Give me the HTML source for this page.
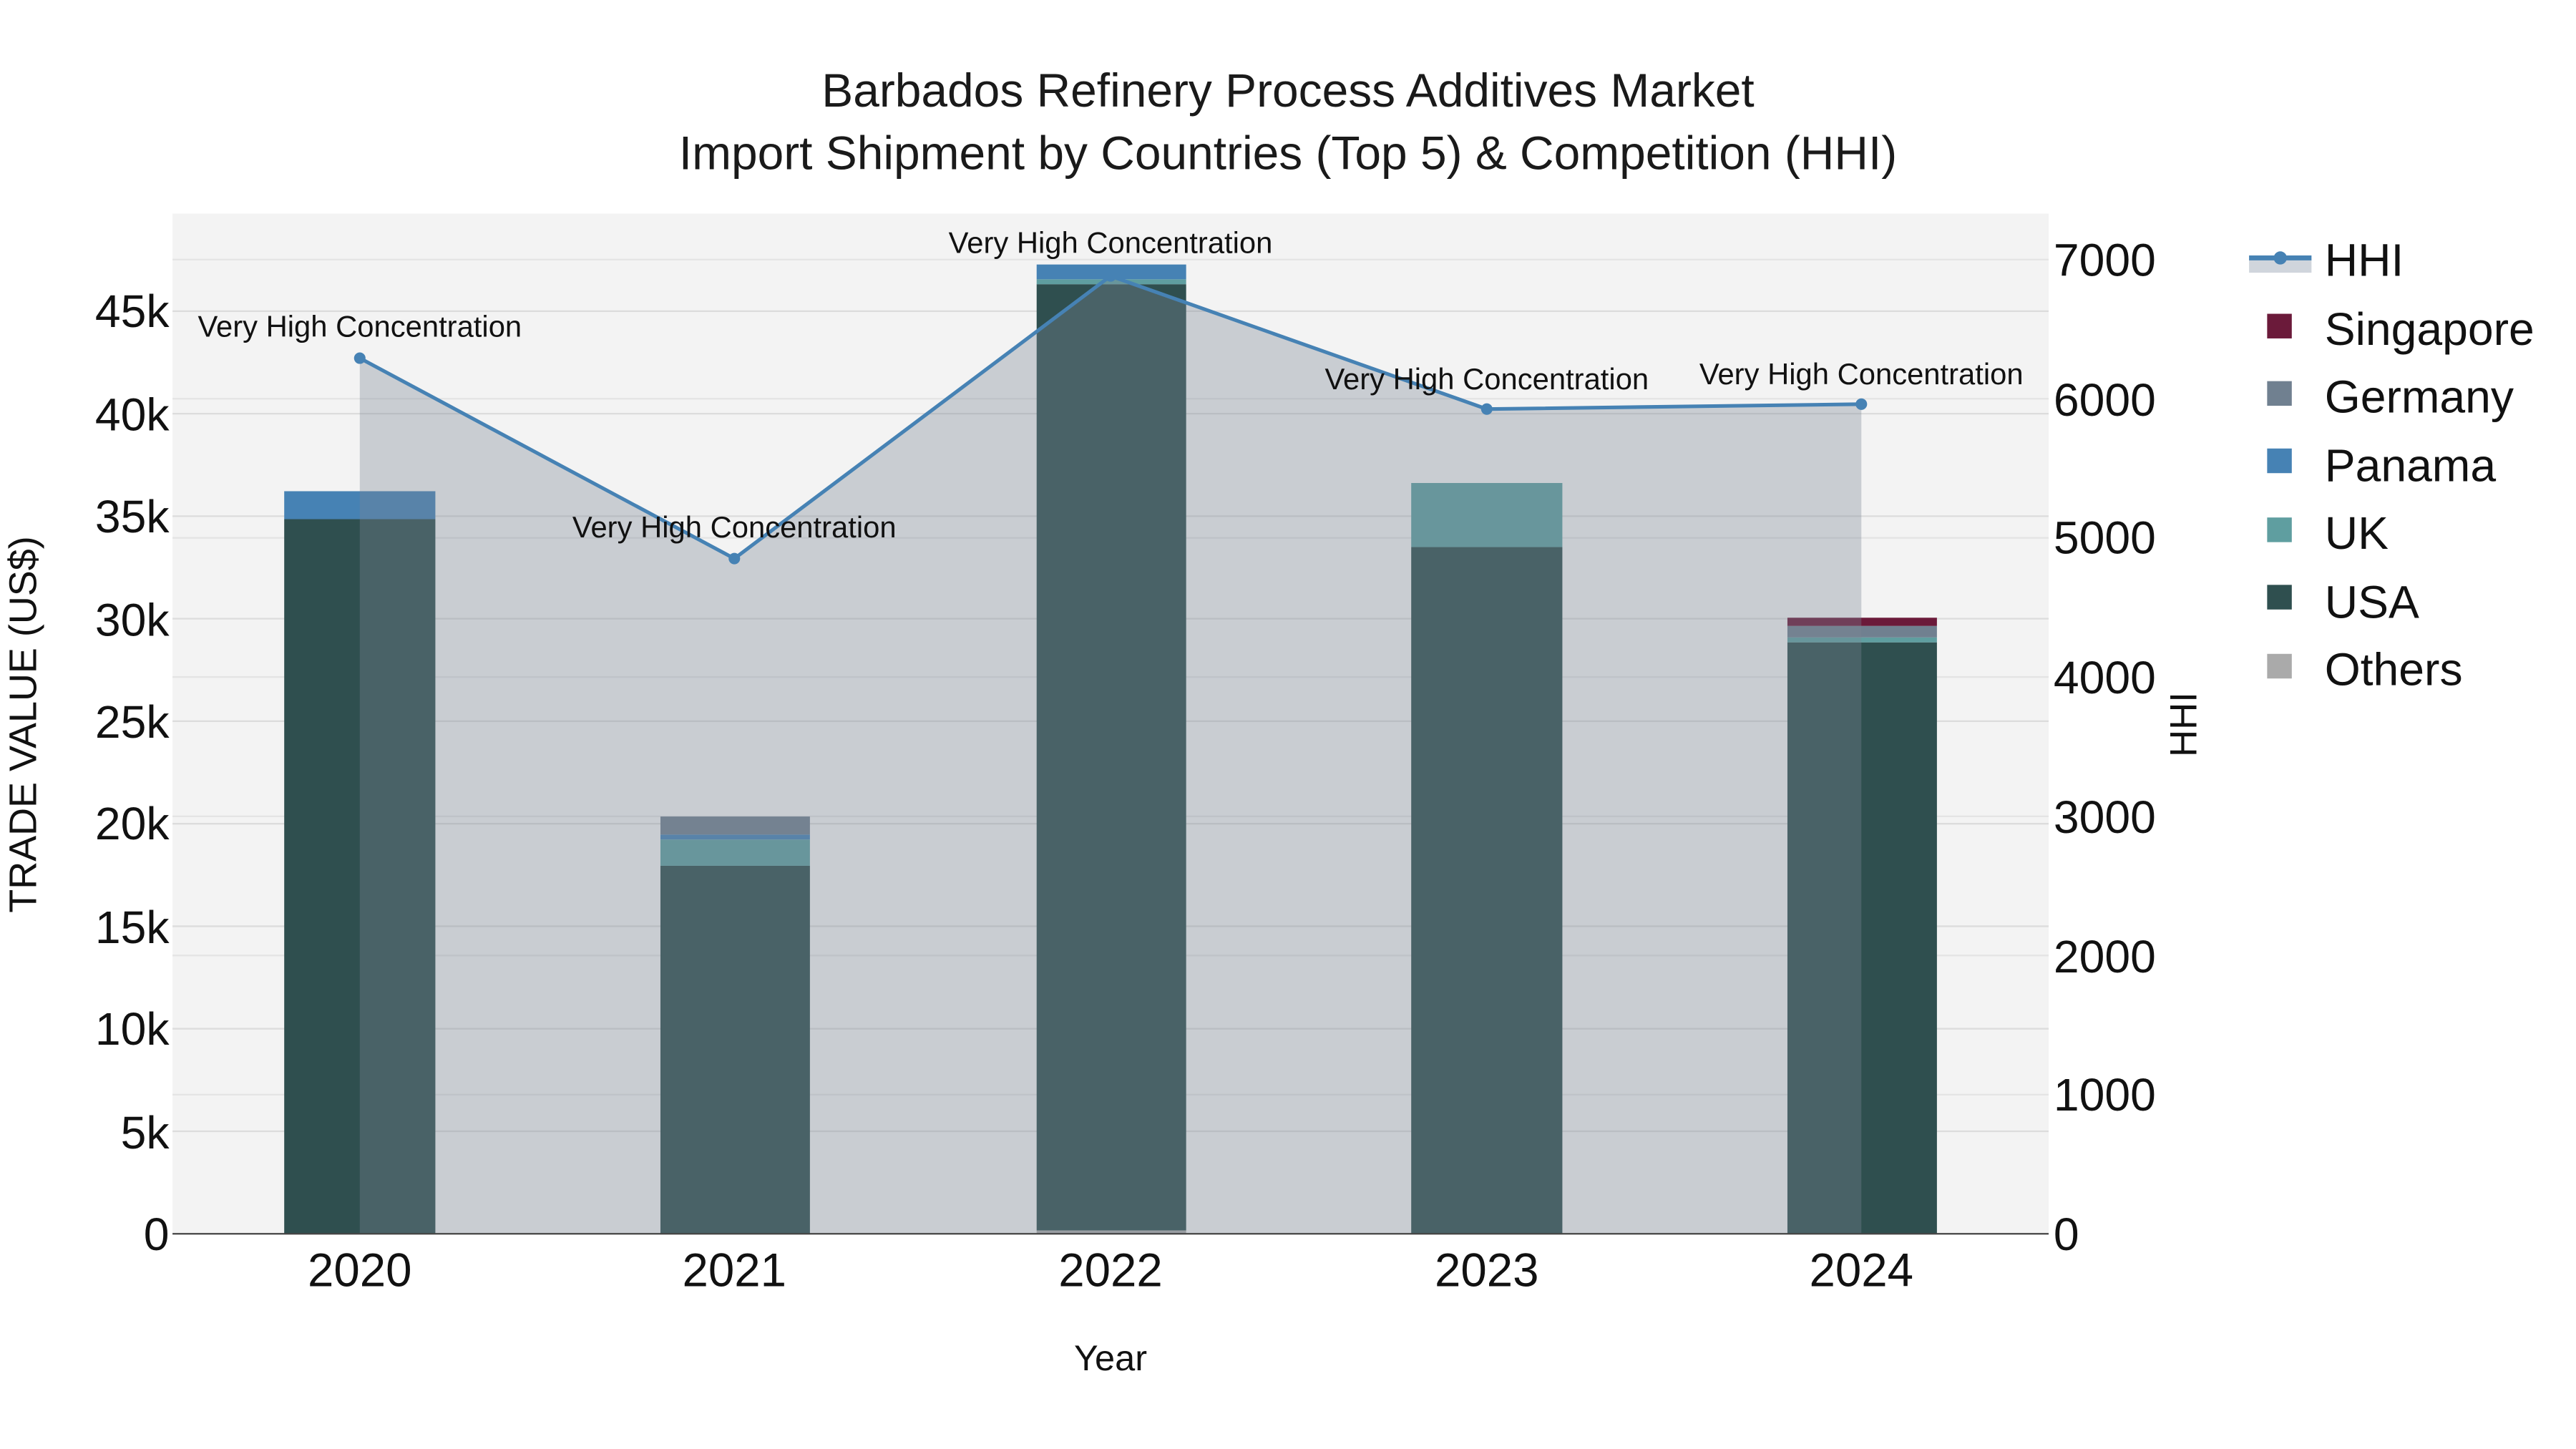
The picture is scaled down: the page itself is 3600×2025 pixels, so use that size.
<!DOCTYPE html>
<html><head><meta charset="utf-8"><style>html,body{margin:0;padding:0;background:#fff}svg{display:block}</style></head>
<body>
<svg width="3600" height="2025" viewBox="0 0 1568 882" xmlns="http://www.w3.org/2000/svg" font-family="'Liberation Sans', sans-serif">
<rect width="1568" height="882" fill="#fff"/>
<rect x="105" y="130" width="1142" height="621" fill="#f3f3f3"/>
<g stroke="#dcdcdc" stroke-width="1">
<line x1="105" x2="1247" y1="688.6" y2="688.6"/><line x1="105" x2="1247" y1="626.2" y2="626.2"/>
<line x1="105" x2="1247" y1="563.8" y2="563.8"/><line x1="105" x2="1247" y1="501.4" y2="501.4"/>
<line x1="105" x2="1247" y1="439" y2="439"/><line x1="105" x2="1247" y1="376.6" y2="376.6"/>
<line x1="105" x2="1247" y1="314.2" y2="314.2"/><line x1="105" x2="1247" y1="251.8" y2="251.8"/>
<line x1="105" x2="1247" y1="189.4" y2="189.4"/>
</g>
<g stroke="#e4e4e4" stroke-width="1">
<line x1="105" x2="1247" y1="666.3" y2="666.3"/><line x1="105" x2="1247" y1="581.6" y2="581.6"/>
<line x1="105" x2="1247" y1="496.9" y2="496.9"/><line x1="105" x2="1247" y1="412.1" y2="412.1"/>
<line x1="105" x2="1247" y1="327.4" y2="327.4"/><line x1="105" x2="1247" y1="242.7" y2="242.7"/>
<line x1="105" x2="1247" y1="158" y2="158"/>
</g>
<rect x="173" y="316" width="92" height="435" fill="#2f4f4f"/>
<rect x="173" y="299" width="92" height="17" fill="#4682b4"/>
<rect x="402" y="527" width="91" height="224" fill="#2f4f4f"/>
<rect x="402" y="511" width="91" height="16" fill="#5f9ea0"/>
<rect x="402" y="508" width="91" height="3" fill="#4682b4"/>
<rect x="402" y="497" width="91" height="11" fill="#708090"/>
<rect x="631" y="173" width="91" height="576" fill="#2f4f4f"/>
<rect x="631" y="749" width="91" height="2" fill="#aaa"/>
<rect x="631" y="170" width="91" height="3" fill="#5f9ea0"/>
<rect x="631" y="161" width="91" height="9" fill="#4682b4"/>
<rect x="859" y="333" width="92" height="418" fill="#2f4f4f"/>
<rect x="859" y="294" width="92" height="39" fill="#5f9ea0"/>
<rect x="1088" y="391" width="91" height="360" fill="#2f4f4f"/>
<rect x="1088" y="388" width="91" height="3" fill="#5f9ea0"/>
<rect x="1088" y="381" width="91" height="7" fill="#708090"/>
<rect x="1088" y="376" width="91" height="5" fill="#6b1a3a"/>
<polygon points="219,218 447,340 676,168 905,249 1133,246 1133,751 219,751" fill="rgba(124,134,148,0.35)"/>
<polyline points="219,218 447,340 676,168 905,249 1133,246" fill="none" stroke="#4682b4" stroke-width="2.2"/>
<g fill="#4682b4"><circle cx="219" cy="218" r="3.5"/><circle cx="447" cy="340" r="3.5"/><circle cx="676" cy="168" r="3.5"/><circle cx="905" cy="249" r="3.5"/><circle cx="1133" cy="246" r="3.5"/></g>
<line x1="105" x2="1247" y1="751" y2="751" stroke="#444" stroke-width="1"/>
<g font-size="18.2" fill="#111" text-anchor="middle">
<text x="219" y="205">Very High Concentration</text>
<text x="447" y="327">Very High Concentration</text>
<text x="676" y="154">Very High Concentration</text>
<text x="905" y="237">Very High Concentration</text>
<text x="1133" y="234">Very High Concentration</text>
</g>
<g font-size="28.7" fill="#1a1a1a" text-anchor="middle">
<text x="784" y="65">Barbados Refinery Process Additives Market</text>
<text x="784" y="103">Import Shipment by Countries (Top 5) &amp; Competition (HHI)</text>
</g>
<g font-size="28" fill="#111" text-anchor="end">
<text x="103" y="761">0</text><text x="103" y="699">5k</text><text x="103" y="636">10k</text>
<text x="103" y="574">15k</text><text x="103" y="511">20k</text><text x="103" y="449">25k</text>
<text x="103" y="387">30k</text><text x="103" y="324">35k</text><text x="103" y="262">40k</text>
<text x="103" y="199">45k</text>
</g>
<g font-size="28" fill="#111">
<text x="1250" y="761">0</text><text x="1250" y="676">1000</text><text x="1250" y="592">2000</text>
<text x="1250" y="507">3000</text><text x="1250" y="422">4000</text><text x="1250" y="337">5000</text>
<text x="1250" y="253">6000</text><text x="1250" y="168">7000</text>
</g>
<g font-size="28.5" fill="#111" text-anchor="middle">
<text x="219" y="783">2020</text><text x="447" y="783">2021</text><text x="676" y="783">2022</text>
<text x="905" y="783">2023</text><text x="1133" y="783">2024</text>
</g>
<text x="676" y="834" font-size="22" fill="#111" text-anchor="middle">Year</text>
<text transform="translate(22,441) rotate(-90)" font-size="23.5" fill="#111" text-anchor="middle">TRADE VALUE (US$)</text>
<text transform="translate(1337,441) rotate(-90)" font-size="23" fill="#111" text-anchor="middle">HHI</text>
<rect x="1369" y="158" width="38" height="8" fill="#d0d5dc"/>
<line x1="1369" x2="1407" y1="157" y2="157" stroke="#4682b4" stroke-width="3"/>
<circle cx="1388" cy="157" r="4" fill="#4682b4"/>
<g font-size="28" fill="#111">
<text x="1415" y="168">HHI</text><text x="1415" y="210">Singapore</text><text x="1415" y="251">Germany</text>
<text x="1415" y="293">Panama</text><text x="1415" y="334">UK</text><text x="1415" y="376">USA</text>
<text x="1415" y="417">Others</text>
</g>
<rect x="1380" y="191" width="15" height="15" fill="#6b1a3a"/>
<rect x="1380" y="232" width="15" height="15" fill="#708090"/>
<rect x="1380" y="273" width="15" height="15" fill="#4682b4"/>
<rect x="1380" y="315" width="15" height="15" fill="#5f9ea0"/>
<rect x="1380" y="356" width="15" height="15" fill="#2f4f4f"/>
<rect x="1380" y="398" width="15" height="15" fill="#aaa"/>
</svg>
</body></html>
